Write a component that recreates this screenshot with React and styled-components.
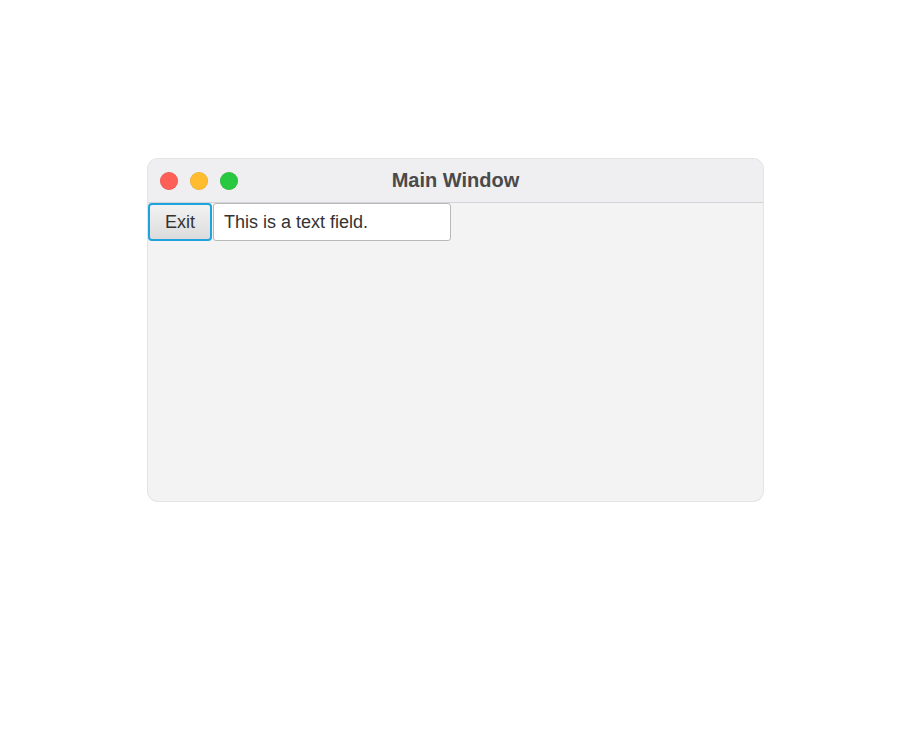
import React from "react";
import styled, { createGlobalStyle } from "styled-components";

const GlobalStyle = createGlobalStyle`
  html, body {
    margin: 0;
    padding: 0;
    background: #ffffff;
    font-family: "Liberation Sans", Arial, sans-serif;
  }
`;

const Page = styled.div`
  width: 900px;
  height: 750px;
  padding: 159px 0 0 148px;
  box-sizing: border-box;
`;

const Window = styled.div`
  width: 615px;
  height: 342px;
  border-radius: 10px;
  background: #f3f3f3;
  box-shadow: 0 0 0 1px #e4e4e6;
  overflow: hidden;
  display: flex;
  flex-direction: column;
`;

const TitleBar = styled.div`
  height: 44px;
  flex: none;
  background: #efeff1;
  border-bottom: 1px solid #d4d4d6;
  box-sizing: border-box;
  display: flex;
  align-items: center;
  position: relative;
  padding-left: 12px;
  gap: 12px;
`;

const Light = styled.span`
  width: 18px;
  height: 18px;
  border-radius: 50%;
  background: ${(p) => p.color};
  box-shadow: inset 0 0 0 0.5px rgba(0, 0, 0, 0.12);
`;

const Title = styled.div`
  position: absolute;
  left: 0;
  right: 0;
  text-align: center;
  font-weight: bold;
  font-size: 20px;
  color: #4a4a4a;
  pointer-events: none;
`;

const Toolbar = styled.div`
  display: flex;
  align-items: stretch;
  gap: 1px;
  height: 38px;
`;

const ExitButton = styled.button`
  width: 64px;
  margin: 0;
  padding: 0;
  font-family: "Liberation Sans", Arial, sans-serif;
  font-size: 18px;
  color: #333;
  background: linear-gradient(#f2f2f2, #dcdcdc);
  border: 2px solid #1ea3dc;
  border-radius: 4px;
  box-sizing: border-box;
`;

const TextField = styled.input`
  width: 238px;
  margin: 0;
  padding: 0 10px;
  font-family: "Liberation Sans", Arial, sans-serif;
  font-size: 18px;
  color: #333;
  background: #ffffff;
  border: 1px solid #b8b8b8;
  border-radius: 3px;
  box-sizing: border-box;
  outline: none;
`;

export default function App() {
  return (
    <>
      <GlobalStyle />
      <Page>
        <Window>
          <TitleBar>
            <Light color="#fe5f57" />
            <Light color="#febc2e" />
            <Light color="#28c840" />
            <Title>Main Window</Title>
          </TitleBar>
          <Toolbar>
            <ExitButton>Exit</ExitButton>
            <TextField defaultValue="This is a text field." />
          </Toolbar>
        </Window>
      </Page>
    </>
  );
}
